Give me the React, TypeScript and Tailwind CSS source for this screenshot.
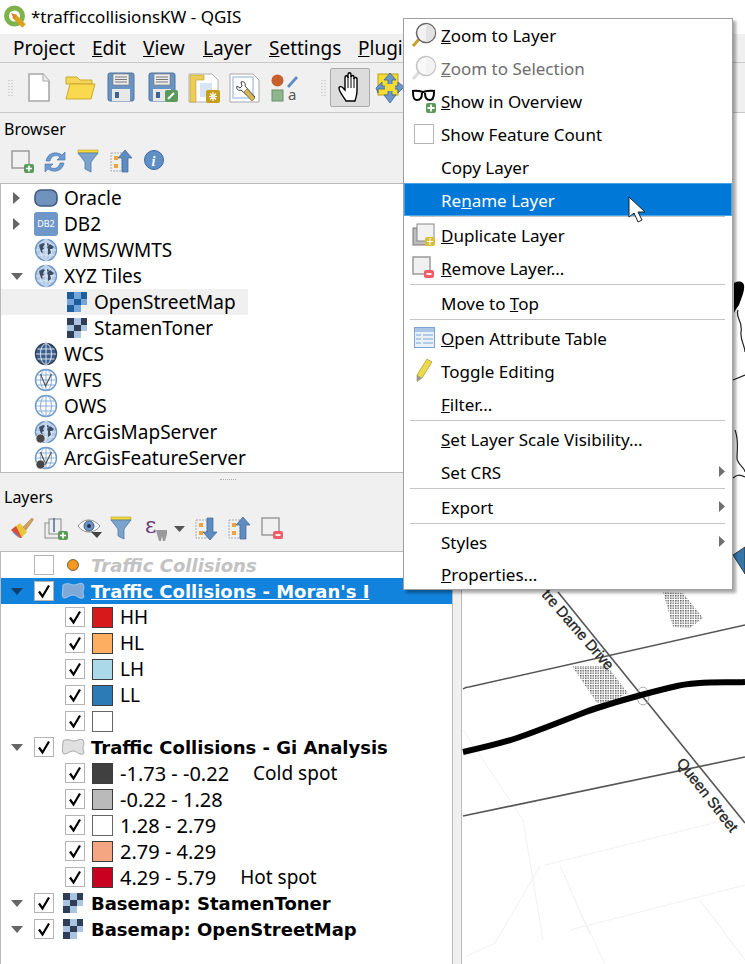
import type { ReactNode } from "react";

// small drawings -------------------------------------------------------------

function Grip() {
  return (
    <svg width="6" height="18" viewBox="0 0 6 18" className="shrink-0">
      <path d="M1 1v16M4 1v16" stroke="#b5b5b5" strokeDasharray="1 2" />
    </svg>
  );
}

function Ico({ w = 24, h = 24, cls = "", children }: { w?: number; h?: number; cls?: string; children: ReactNode }) {
  return (
    <svg width={w} height={h} viewBox={`0 0 ${w} ${h}`} className={`shrink-0 overflow-visible ${cls}`}>
      {children}
    </svg>
  );
}

function QgisLogo() {
  return (
    <Ico w={24} h={24}>
      <circle cx="11.500" cy="11" r="8" fill="none" stroke="#7eb34c" strokeWidth="5" />
      <path d="M11 11l10 10" stroke="#d9a31f" strokeWidth="5" />
      <path d="M8 8l6 2-3 4z" fill="#e0812a" />
    </Ico>
  );
}

function NewDoc() {
  return (
    <Ico w={22} h={29}>
      <path d="M1 1h14l6 7v20H1z" fill="#fff" stroke="#a8a8a8" strokeWidth="1.600" />
      <path d="M15 1v7h6" fill="#eee" stroke="#a8a8a8" />
    </Ico>
  );
}

function Folder() {
  return (
    <Ico w={31} h={25}>
      <path d="M1 2h11l3 3h12v4H1z" fill="#f5d65a" stroke="#c9aa2e" />
      <path d="M1 24L5 9h25l-4 15z" fill="#fbd94f" stroke="#c9aa2e" />
    </Ico>
  );
}

function Disk({ badge }: { badge?: boolean }) {
  return (
    <Ico w={31} h={31}>
      <rect x="1" y="1" width="26" height="28" rx="2" fill="#6b93c2" stroke="#4c74a4" />
      <rect x="6" y="2" width="16" height="11" fill="#ececec" stroke="#777" strokeWidth=".6" />
      <path d="M8 5h12M8 7.500h12M8 10h12" stroke="#777" />
      <rect x="5" y="17" width="18" height="12" fill="#e8e8e8" />
      <rect x="8" y="20" width="4" height="6" fill="#3e6496" />
      {badge && <rect x="17" y="18" width="13" height="12" rx="2" fill="#5a9a5a" />}
      {badge && <path d="M20 27l6-6" stroke="#fff" strokeWidth="2" />}
    </Ico>
  );
}

function LayoutIco() {
  return (
    <Ico w={32} h={30}>
      <path d="M1 1h23l6 6v22H1z" fill="#fff" stroke="#b0b0b0" />
      <path d="M2 2h14v5H8v22H2z" fill="#eccd57" stroke="#b99a2a" strokeWidth=".6" />
      <rect x="12" y="10" width="12" height="14" fill="#d7e4f3" />
      <rect x="18" y="17" width="14" height="13" rx="2" fill="#c59f1c" />
      <path d="M25 19v9M21 23.500h8M22 20.500l6 6M28 20.500l-6 6" stroke="#fff" strokeWidth="1.200" />
    </Ico>
  );
}

function StyleMgr() {
  return (
    <Ico w={31} h={30}>
      <path d="M1 1h23l6 6v22H1z" fill="#fff" stroke="#a8a8a8" />
      <rect x="4" y="4" width="20" height="21" fill="none" stroke="#b4c9e4" strokeWidth="1.500" />
      <path d="M12 9c3-1 5 1 4 4l10 11-3 3-11-10c-3 1-5-1-4-4l3 2 2-2z" fill="#fff" stroke="#444" />
      <path d="M18 16l8 9-3 3-8-9z" fill="#d8bb59" stroke="#7d6a2a" strokeWidth=".7" />
    </Ico>
  );
}

function LabelIco() {
  return (
    <Ico w={28} h={28}>
      <circle cx="6.500" cy="6.500" r="6" fill="#c8602d" />
      <path d="M16 12l9-10 2 2-9 10z" fill="#5f8cc0" />
      <rect x="1" y="16" width="11" height="11" fill="#8eb58d" stroke="#6a9069" />
      <text x="17" y="26" fontSize="15" fill="#555">
        a
      </text>
    </Ico>
  );
}

function Hand() {
  return (
    <Ico w={26} h={33}>
      <path
        d="M9 30C7 26 2 21 2 17c0-2 3-2 5 1l1 1V7c0-3 3-3 3 0V4c0-3 3-3 3 0v2c0-2 3-2 3 0v2c0-2 3-2 3 0v12c0 4-1 6-2 10z"
        fill="#fff"
        stroke="#000"
        strokeWidth="1.400"
      />
      <path d="M11 6v11M14 5v12M17 7v10" stroke="#000" />
    </Ico>
  );
}

function PanIco() {
  return (
    <Ico w={28} h={31}>
      <rect x="2" y="2" width="20" height="21" fill="#f6dc2f" stroke="#b59f20" />
      <path d="M14 1l6 7h-4v6h6v-4l6 5-6 6v-4h-6v6h4l-6 8-6-8h4v-6H2v4l-2-5 6-6v4h6V8H8z" fill="#6d97c6" stroke="#3e6698" strokeWidth=".8" />
      <rect x="9" y="12" width="10" height="7" fill="#f6dc2f" />
    </Ico>
  );
}

function AddLayer() {
  return (
    <Ico w={24} h={24}>
      <rect x="1" y="1" width="17" height="17" fill="#f0f0f0" stroke="#9a9a9a" strokeWidth="1.500" />
      <rect x="13" y="14" width="10" height="9" rx="2" fill="#5a9a5a" />
      <path d="M18 15.500v6M15 18.500h6" stroke="#fff" strokeWidth="1.600" />
    </Ico>
  );
}

function RemoveLayer() {
  return (
    <Ico w={24} h={24}>
      <rect x="1" y="1" width="17" height="17" fill="#f0f0f0" stroke="#9a9a9a" strokeWidth="1.500" />
      <rect x="12" y="14" width="10" height="8" rx="2" fill="#f25c68" />
      <path d="M14.500 18h5" stroke="#fff" strokeWidth="1.800" />
    </Ico>
  );
}

function Refresh() {
  return (
    <Ico w={22} h={24}>
      <path d="M2 11C3 4 11 0 18 5l3-3v8h-8l3-3C12 4 7 6 6 11z" fill="#6f9bd0" stroke="#3f6ea8" strokeWidth=".6" />
      <path d="M20 13c-1 7-9 11-16 6l-3 3v-8h8l-3 3c4 3 9 1 10-4z" fill="#6f9bd0" stroke="#3f6ea8" strokeWidth=".6" />
    </Ico>
  );
}

function Funnel() {
  return (
    <Ico w={20} h={23}>
      <path d="M0 0h20v3H0z" fill="#f5dc3c" stroke="#a88f16" strokeWidth=".5" />
      <path d="M0 3h20l-7 9v10l-6-3v-7z" fill="#7da3cc" stroke="#4d7aa8" strokeWidth=".8" />
    </Ico>
  );
}

function TreeArrow({ up }: { up?: boolean }) {
  return (
    <Ico w={23} h={24}>
      <path d="M1 3h11v18H1z" fill="#f0f0f0" stroke="#aaa" strokeDasharray="2 1" />
      <rect x="4" y="6" width="4" height="4" fill="#f2a33a" />
      <rect x="4" y="14" width="4" height="4" fill="#f2a33a" />
      {up ? (
        <path d="M15 0l7 8h-4v14h-6V8H8z" fill="#5f8cc0" stroke="#3c6595" strokeWidth=".7" />
      ) : (
        <path d="M15 23l7-8h-4V1h-6v14H8z" fill="#5f8cc0" stroke="#3c6595" strokeWidth=".7" />
      )}
    </Ico>
  );
}

function InfoIco() {
  return (
    <Ico w={20} h={20}>
      <circle cx="10" cy="10" r="9.500" fill="#5f8fc4" stroke="#3c6a9f" />
      <text x="7.500" y="15.500" fontSize="14" fontWeight="700" fontStyle="italic" fontFamily="Liberation Serif" fill="#fff">
        i
      </text>
    </Ico>
  );
}

function Brush() {
  return (
    <Ico w={24} h={22}>
      <path d="M1 13l9-7 7 9-6 6z" fill="#e9c63a" />
      <path d="M1 13l5-4 6 12-2 0z" fill="#d94b3c" />
      <path d="M2 15l4 1 3 5z" fill="#5f87c4" />
      <path d="M13 10L22 1l1.500 1.500L16 13z" fill="#d2a25c" stroke="#9d7434" strokeWidth=".5" />
    </Ico>
  );
}

function AddGroup() {
  return (
    <Ico w={24} h={24}>
      <rect x="1" y="6" width="14" height="15" fill="#eee" stroke="#8b8b8b" />
      <rect x="5" y="2" width="12" height="15" fill="#eee" stroke="#8b8b8b" />
      <path d="M10 1v14" stroke="#4a6e99" strokeWidth="1.500" />
      <rect x="14" y="14" width="10" height="9" rx="2" fill="#5a9a5a" />
      <path d="M19 15.500v6M16 18.500h6" stroke="#fff" strokeWidth="1.600" />
    </Ico>
  );
}

function Eye() {
  return (
    <Ico w={25} h={22}>
      <path d="M1 9c6-8 15-8 22 0-6 8-16 8-22 0z" fill="#fff" stroke="#888" />
      <circle cx="12" cy="9" r="5" fill="#6e93c4" stroke="#3d5d88" />
      <circle cx="12" cy="9" r="2" fill="#1f3555" />
      <path d="M14 15h11l-5 6z" fill="#444" />
    </Ico>
  );
}

function Epsilon() {
  return (
    <Ico w={23} h={24}>
      <text x="0" y="16" fontSize="22" fill="#6a3a78" fontFamily="DejaVu Serif">
        ε
      </text>
      <path d="M11 13h11v4l-2 7h-2l-1-5-1 5h-2l-2-7z" fill="#9a9a9a" />
    </Ico>
  );
}

function Globe({ kind }: { kind: "solid" | "wcs" | "wfs" | "ows" | "ags" | "agf" }) {
  const solid = kind === "solid" || kind === "ags";
  const grid = kind === "wcs" ? "#e6eef8" : solid ? "#dfe9f5" : "#7ea6d4";
  return (
    <Ico w={24} h={24}>
      <circle cx="12" cy="12" r="10.500" fill={kind === "wcs" ? "#3e5f8c" : solid ? "#b4cae4" : "#fff"} stroke={kind === "wcs" ? "#2f3f55" : "#6c97c9"} strokeWidth="1.400" />
      <path d="M2 12h20M3.500 7h17M3.500 17h17M12 2v20" stroke={grid} strokeWidth=".9" />
      <ellipse cx="12" cy="12" rx="5.500" ry="10.500" fill="none" stroke={grid} strokeWidth=".9" />
      {solid && <path d="M5 7l4-2 2 1-2 3 1 2-2 1 1 3-2-1-1-3zM13 5l2 1-1 2-1-1zM16 6l4 3-2 2-2 0 1 4-3 2 0-6-1-2z" fill="#3d4d66" />}
      {(kind === "wfs" || kind === "agf") && <path d="M6.500 6l5 12 6-12" fill="none" stroke="#555" strokeWidth="1.200" />}
      {(kind === "ags" || kind === "agf") && <circle cx="6.500" cy="18.500" r="4.500" fill="#474747" stroke="#eee" strokeWidth=".7" />}
    </Ico>
  );
}

function Tiles({ dark, legend }: { dark?: boolean; legend?: boolean }) {
  const a = legend || dark ? "#2e3e56" : "#1f5d9c";
  const b = legend || dark ? "#aac4e2" : "#73a7dc";
  return (
    <Ico w={20} h={20}>
      <rect width="7" height="7" fill={a} />
      <rect x="7" width="7" height="7" fill={b} />
      <rect x="14" width="6" height="7" fill={a} />
      <rect y="7" width="7" height="6" fill={b} />
      <rect x="7" y="7" width="7" height="6" fill={a} />
      <rect x="14" y="7" width="6" height="6" fill={b} />
      <rect y="13" width="7" height="7" fill={a} />
      <rect x="7" y="13" width="7" height="7" fill={b} />
    </Ico>
  );
}

function Poly({ fill, stroke }: { fill: string; stroke: string }) {
  return (
    <Ico w={24} h={18}>
      <path d="M2 3c5-3 8 0 11 0s6-3 9-1c2 4 0 6 0 8 0 3 2 5 0 6-5 1-6-3-10-3s-5 3-9 3C0 15 2 9 2 3z" fill={fill} stroke={stroke} />
    </Ico>
  );
}

function Caret({ open, light }: { open?: boolean; light?: boolean }) {
  return (
    <span className="flex h-3 w-[13px] shrink-0 items-center justify-center">
      {open ? (
        <Ico w={12} h={7}>
          <path d="M0 0h12L6 7z" fill={light ? "#0f3f6e" : "#666"} />
        </Ico>
      ) : (
        <Ico w={7} h={12}>
          <path d="M0 0l7 6-7 6z" fill="#666" />
        </Ico>
      )}
    </span>
  );
}

function Check({ on = true }: { on?: boolean }) {
  return (
    <span className="flex h-[20px] w-[20px] shrink-0 items-center justify-center border border-[#b4b4b4] bg-white">
      {on && (
        <Ico w={14} h={14}>
          <path d="M2 7.500l3.500 5L12 1.500" fill="none" stroke="#000" strokeWidth="2.200" />
        </Ico>
      )}
    </span>
  );
}

// browser panel --------------------------------------------------------------

const browserRows: { label: string; icon: ReactNode; caret?: "open" | "closed"; child?: boolean; hl?: boolean }[] = [
  {
    label: "Oracle",
    caret: "closed",
    icon: (
      <Ico w={24} h={18}>
        <rect x="1" y="1" width="22" height="16" rx="6" fill="#6f93bd" stroke="#3e5b80" strokeWidth="1.600" />
      </Ico>
    ),
  },
  {
    label: "DB2",
    caret: "closed",
    icon: <span className="flex h-6 w-6 items-center justify-center rounded-[3px] bg-[#6f98c8] text-[9px] text-white">DB2</span>,
  },
  { label: "WMS/WMTS", icon: <Globe kind="solid" /> },
  { label: "XYZ Tiles", caret: "open", icon: <Globe kind="solid" /> },
  { label: "OpenStreetMap", child: true, hl: true, icon: <Tiles /> },
  { label: "StamenToner", child: true, icon: <Tiles dark /> },
  { label: "WCS", icon: <Globe kind="wcs" /> },
  { label: "WFS", icon: <Globe kind="wfs" /> },
  { label: "OWS", icon: <Globe kind="ows" /> },
  { label: "ArcGisMapServer", icon: <Globe kind="ags" /> },
  { label: "ArcGisFeatureServer", icon: <Globe kind="agf" /> },
];

function BrowserTree() {
  return (
    <div className="h-[290px] overflow-hidden border-y border-l border-[#b9b9b9] bg-white pt-[1px] text-[19px] leading-[26px] text-black">
      {browserRows.map((r) =>
        r.child ? (
          <div key={r.label} className={`flex h-[26px] w-[247px] items-center pl-[66px] ${r.hl ? "bg-[#f0f0f0]" : ""}`}>
            {r.icon}
            <span className="ml-[7px]">{r.label}</span>
          </div>
        ) : (
          <div key={r.label} className="flex h-[26px] items-center pl-[9px]">
            <span className="w-[24px]">{r.caret && <Caret open={r.caret === "open"} />}</span>
            <span className="flex w-[30px] justify-start">{r.icon}</span>
            <span>{r.label}</span>
          </div>
        ),
      )}
    </div>
  );
}

// layers panel ---------------------------------------------------------------

function LayerRow({ children, icon, on = true, active, cls = "" }: { children: ReactNode; icon: ReactNode; on?: boolean; active?: boolean; cls?: string }) {
  return (
    <div className={`flex h-[26px] items-center pl-[9px] ${active ? "bg-[#1283dc]" : ""}`}>
      <span className="w-[24px]">{on && <Caret open light={active} />}</span>
      <Check on={on} />
      <span className="flex w-[37px] justify-center">{icon}</span>
      <span className={`mt-[1px] whitespace-pre font-['DejaVu_Sans',sans-serif] text-[18px] font-bold ${cls}`}>{children}</span>
    </div>
  );
}

function LegendRow({ color, label, note, noteGap = 0, border = "#3d3d3d", num }: { color: string; label?: string; note?: string; noteGap?: number; border?: string; num?: boolean }) {
  return (
    <div className="flex h-[26px] items-center pl-[64px]">
      <Check />
      <span className="ml-[7px] h-[21px] w-[21px] border" style={{ background: color, borderColor: border }} />
      {label && <span className={`ml-[7px] mt-[1px] whitespace-pre ${num ? "text-[20px]" : "text-[19px]"}`}>{label}</span>}
      {note && (
        <span className="mt-[1px] whitespace-pre text-[19px]" style={{ marginLeft: noteGap }}>
          {note}
        </span>
      )}
    </div>
  );
}

function LayersTree() {
  return (
    <div className="h-[413px] overflow-hidden border-t border-l border-[#b9b9b9] bg-white text-black">
      <LayerRow
        on={false}
        icon={
          <Ico w={14} h={14}>
            <circle cx="7" cy="7" r="5.500" fill="#f59a1c" stroke="#333" strokeWidth=".7" />
          </Ico>
        }
        cls="italic text-[#c2c2c2]"
      >
        Traffic Collisions
      </LayerRow>
      <LayerRow active icon={<Poly fill="#7fa9d6" stroke="#a9c9ec" />} cls="text-white underline">
        Traffic Collisions - Moran's I
      </LayerRow>
      <LegendRow color="#d7191c" label="HH" />
      <LegendRow color="#fdae61" label="HL" />
      <LegendRow color="#abd9e9" label="LH" />
      <LegendRow color="#2c7bb6" label="LL" />
      <LegendRow color="#ffffff" border="#666" />
      <LayerRow icon={<Poly fill="#e0e0e0" stroke="#a5a5a5" />}>Traffic Collisions - Gi Analysis</LayerRow>
      <LegendRow num color="#404040" label="-1.73 - -0.22" note="Cold spot" noteGap={24} />
      <LegendRow num color="#bababa" label="-0.22 - 1.28" />
      <LegendRow num color="#ffffff" label="1.28 - 2.79" border="#666" />
      <LegendRow num color="#f4a582" label="2.79 - 4.29" />
      <LegendRow num color="#ca0020" label="4.29 - 5.79" note="Hot spot" noteGap={24} />
      <LayerRow icon={<Tiles legend />}>Basemap: StamenToner</LayerRow>
      <LayerRow icon={<Tiles legend />}>Basemap: OpenStreetMap</LayerRow>
    </div>
  );
}

// map ------------------------------------------------------------------------

function MapCanvas() {
  return (
    <svg width="283" height="851" viewBox="462 113 283 851" className="block">
      <defs>
        <pattern id="dots" width="2.500" height="2.500" patternUnits="userSpaceOnUse">
          <rect width="1.500" height="1.500" fill="#666" />
        </pattern>
      </defs>
      {/* faint background streets */}
      <g stroke="#f1f1f1" fill="none">
        <path d="M463 730l60 90 20 120M545 865l200-50M540 866l-45 77 -30 14M560 865l30 70M570 930l175-45M700 900l45 60M575 900l30 64" />
        <path d="M600 645l14 13 -12 10" />
      </g>
      {/* streets */}
      <path d="M463 689c2-1 3-2 6-2L745 625" stroke="#555" strokeWidth="1.600" fill="none" />
      <path d="M463 816L745 757" stroke="#555" strokeWidth="1.600" fill="none" />
      <path d="M558 592L745 823" stroke="#555" strokeWidth="1.600" fill="none" />
      <ellipse cx="643" cy="696" rx="6" ry="9" fill="none" stroke="#aaa" />
      <path d="M463 752C490 746 505 742 517 738S560 722 583 713 655 691 677 686 725 683 745 682" stroke="#000" strokeWidth="6" fill="none" />
      {/* buildings */}
      <path d="M572 666h35l21 27-21 10h-10z" fill="url(#dots)" />
      <path d="M663 592l20 1 20 25-13 10-17-1z" fill="url(#dots)" />
      {/* labels */}
      <text fontSize="15" fontFamily="Liberation Sans" transform="translate(541 595) rotate(49)" fill="#222" stroke="#222" strokeWidth=".3">
        tre Dame Drive
      </text>
      <text fontSize="15" fontFamily="Liberation Sans" transform="translate(676 763) rotate(52)" fill="#222" stroke="#222" strokeWidth=".3">
        Queen Street
      </text>
      {/* right strip beside the menu */}
      <path d="M734 283c6-3 9-1 10 2 1 6-3 14-5 20-2 3-4 5-5 8z" fill="#000" />
      <path d="M738 310c-3 8 5 10 3 22 -1 8 4 14 4 20M733 380l12-5M735 430c4 10 2 18 2 28 0 6 8 10 8 14M733 478c4-3 6-4 12-1" stroke="#222" strokeWidth="1.200" fill="none" />
      <path d="M733 555l12-8v27z" fill="#3577ab" stroke="#222" strokeWidth=".8" />
    </svg>
  );
}

// context menu ---------------------------------------------------------------

function ZoomLens({ faded }: { faded?: boolean }) {
  return (
    <Ico w={24} h={24} cls={faded ? "opacity-40" : ""}>
      <path d="M1 23l8-9" stroke={faded ? "#aaa" : "#c9a02a"} strokeWidth="3" />
      <circle cx="14" cy="10" r="9.500" fill="#f2f2f2" stroke="#666" strokeWidth="1.500" />
      <path d="M14 1a9 9 0 0 1 0 18" fill="#e2e2e2" />
    </Ico>
  );
}

function Glasses() {
  return (
    <Ico w={26} h={24}>
      <path d="M1 2c6-1 8 0 11 1 3-1 6-2 12-1" stroke="#000" strokeWidth="2" fill="none" />
      <path d="M2 3c0 6 1 8 4 8s5-2 5-7M14 4c0 5 2 7 5 7s4-3 4-8" stroke="#000" strokeWidth="2" fill="none" />
      <rect x="15" y="14" width="10" height="10" rx="2" fill="#5a9a5a" />
      <path d="M20 15.500v7M16.500 19h7" stroke="#fff" strokeWidth="1.800" />
    </Ico>
  );
}

function DupIco() {
  return (
    <Ico w={24} h={24}>
      <rect x="1" y="5" width="17" height="17" fill="#bdbdbd" stroke="#777" />
      <rect x="5" y="1" width="17" height="17" fill="#f2f2f2" stroke="#888" />
      <rect x="13" y="14" width="10" height="9" rx="2" fill="#d8bf3a" />
      <path d="M18 15v7M15 18.500h6" stroke="#fff" />
    </Ico>
  );
}

function TableIco() {
  return (
    <Ico w={21} h={21}>
      <rect x=".5" y=".5" width="20" height="20" fill="#e8f0f8" stroke="#7ba4d2" />
      <rect x="1" y="1" width="19" height="4" fill="#a9c6e6" />
      <path d="M2 8h5M9 8h10M2 12h5M9 12h10M2 16h5M9 16h10" stroke="#7ba4d2" />
    </Ico>
  );
}

function Pencil() {
  return (
    <Ico w={18} h={25}>
      <path d="M12 1l5 3-10 16-5 3 0-6z" fill="#ecd94e" stroke="#a9981f" strokeWidth=".7" />
      <path d="M2 17l5 3-5 4z" fill="#9a9a9a" />
    </Ico>
  );
}

function Item({ icon, children, arrow, hl, dim, h = 33 }: { icon?: ReactNode; children: ReactNode; arrow?: boolean; hl?: boolean; dim?: boolean; h?: number }) {
  return (
    <div
      className={`relative flex items-center ${hl ? "border border-[#4aa4e8] bg-[#0078d7] pl-[36px] text-white" : dim ? "pl-[37px] text-[#6d6d6d]" : "pl-[37px] text-black"}`}
      style={{ height: h }}
    >
      {icon && <span className="absolute left-[7px] flex w-[26px] justify-center">{icon}</span>}
      <span className="mt-[2px] whitespace-pre">{children}</span>
      {arrow && (
        <Ico w={6} h={11} cls="absolute right-[7px]">
          <path d="M0 0l6 5.500L0 11z" fill="#6f6f6f" />
        </Ico>
      )}
    </div>
  );
}

function Sep() {
  return (
    <div className="flex h-[2px] pl-[6px] pr-[7px]">
      <div className="h-[1px] w-full bg-[#c4c4c4]" />
    </div>
  );
}

function ContextMenu() {
  return (
    <div className="absolute left-[403px] top-[18px] h-[572px] w-[330px] border border-[#a0a0a0] bg-white text-[17px] shadow-[3px_3px_3px_rgba(0,0,0,0.35)]">
      <Item h={32} icon={<ZoomLens />}>
        <u>Z</u>oom to Layer
      </Item>
      <Item dim icon={<ZoomLens faded />}>
        <u>Z</u>oom to Selection
      </Item>
      <Item icon={<Glasses />}>
        <u>S</u>how in Overview
      </Item>
      <Item icon={<span className="block h-5 w-5 border border-[#b4b4b4] bg-white" />}>Show Feature Count</Item>
      <Item>Copy Layer</Item>
      <Item hl>
        Re<u>n</u>ame Layer
      </Item>
      <Sep />
      <Item icon={<DupIco />}>
        <u>D</u>uplicate Layer
      </Item>
      <Item icon={<RemoveLayer />}>
        <u>R</u>emove Layer...
      </Item>
      <Sep />
      <Item>
        Move to <u>T</u>op
      </Item>
      <Sep />
      <Item icon={<TableIco />}>
        <u>O</u>pen Attribute Table
      </Item>
      <Item icon={<Pencil />}>Toggle Editing</Item>
      <Item>
        <u>F</u>ilter...
      </Item>
      <Sep />
      <Item>
        <u>S</u>et Layer Scale Visibility...
      </Item>
      <Item arrow>Set CRS</Item>
      <Sep />
      <Item arrow>Export</Item>
      <Sep />
      <Item arrow>Styles</Item>
      <Item h={32}>
        <u>P</u>roperties...
      </Item>
      {/* arrow pointer */}
      <Ico w={18} h={28} cls="absolute left-[224px] top-[177px]">
        <path d="M1 1v20l5-4 4 9 4-2-4-8h7z" fill="#fff" stroke="#222" strokeWidth="1" />
      </Ico>
    </div>
  );
}

// page -----------------------------------------------------------------------

export default function App() {
  return (
    <div className="relative flex h-[964px] w-[745px] flex-col overflow-hidden bg-white font-['Noto_Sans',sans-serif] text-black">
      {/* title bar */}
      <div className="flex h-[34px] items-center bg-white pl-[3px] text-[17px]">
        <QgisLogo />
        <span className="ml-[4px]">*trafficcollisionsKW - QGIS</span>
      </div>

      {/* menu bar */}
      <div className="flex h-[28px] items-center overflow-hidden bg-[#f0f0f0] pl-[13px] text-[19px]">
        <span className="w-[79px]">Project</span>
        <span className="w-[51px]">
          <u>E</u>dit
        </span>
        <span className="w-[60px]">
          <u>V</u>iew
        </span>
        <span className="w-[66px]">
          <u>L</u>ayer
        </span>
        <span className="w-[89px]">
          <u>S</u>ettings
        </span>
        <span>
          <u>P</u>lugins
        </span>
      </div>

      {/* main toolbar */}
      <div className="flex h-[51px] items-center border-y border-[#c8c8c8] bg-[#f0f0f0] pl-[8px]">
        <Grip />
        <span className="ml-[14px]">
          <NewDoc />
        </span>
        <span className="ml-[15px]">
          <Folder />
        </span>
        <span className="ml-[11px]">
          <Disk />
        </span>
        <span className="ml-[10px]">
          <Disk badge />
        </span>
        <span className="ml-[9px]">
          <LayoutIco />
        </span>
        <span className="ml-[9px]">
          <StyleMgr />
        </span>
        <span className="ml-[11px]">
          <LabelIco />
        </span>
        <span className="ml-[22px]">
          <Grip />
        </span>
        <span className="ml-[3px] flex h-[39px] w-[40px] items-center justify-center rounded-[2px] border border-[#aaa] bg-[#dcdcdc]">
          <Hand />
        </span>
        <span className="ml-[6px]">
          <PanIco />
        </span>
      </div>

      <div className="flex min-h-0 flex-1">
        {/* left docks */}
        <div className="flex w-[452px] shrink-0 flex-col bg-[#f0f0f0]">
          <div className="flex h-[32px] items-center pl-[4px] text-[16px]">Browser</div>
          <div className="flex h-[38px] items-start pl-[11px] pt-[5px]">
            <AddLayer />
            <span className="ml-[9px]">
              <Refresh />
            </span>
            <span className="ml-[12px]">
              <Funnel />
            </span>
            <span className="ml-[12px]">
              <TreeArrow up />
            </span>
            <span className="ml-[11px]">
              <InfoIco />
            </span>
          </div>
          <BrowserTree />
          <div className="flex h-[12px] items-center justify-center pl-[4px]">
            <span className="h-[1px] w-[16px] border-t border-dotted border-[#aaa]" />
          </div>
          <div className="flex h-[24px] items-center pl-[4px] text-[16px]">Layers</div>
          <div className="flex h-[42px] items-start pl-[10px] pt-[8px]">
            <Brush />
            <span className="ml-[10px]">
              <AddGroup />
            </span>
            <span className="ml-[9px]">
              <Eye />
            </span>
            <span className="ml-[9px]">
              <Funnel />
            </span>
            <span className="ml-[14px]">
              <Epsilon />
            </span>
            <Ico w={11} h={6} cls="ml-[6px] mt-[9px]">
              <path d="M0 0h11L5.500 6z" fill="#555" />
            </Ico>
            <span className="ml-[10px]">
              <TreeArrow />
            </span>
            <span className="ml-[10px]">
              <TreeArrow up />
            </span>
            <span className="ml-[10px]">
              <RemoveLayer />
            </span>
          </div>
          <LayersTree />
        </div>

        {/* splitter */}
        <div className="w-[10px] shrink-0 border-x border-[#b9b9b9] bg-[#f0f0f0]" />

        {/* map canvas */}
        <div className="min-w-0 flex-1 bg-white">
          <MapCanvas />
        </div>
      </div>

      <ContextMenu />
    </div>
  );
}
